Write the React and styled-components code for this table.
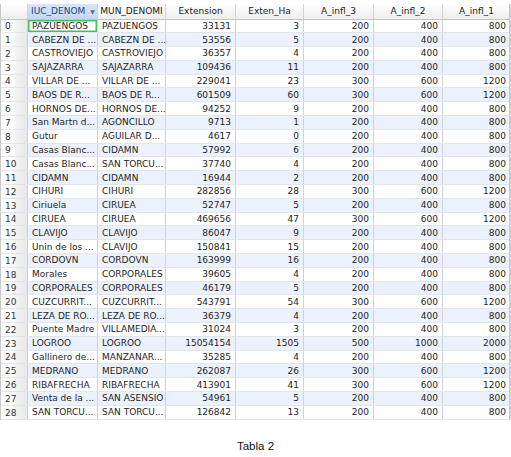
import styled, { createGlobalStyle } from "styled-components";

const GlobalStyle = createGlobalStyle`
  html, body {
    margin: 0;
    padding: 0;
    background: #ffffff;
  }
`;

const COLUMNS = [
  { key: "idx", label: "", width: 27 },
  { key: "iuc", label: "IUC_DENOM", width: 70, text: true, sorted: true },
  { key: "mun", label: "MUN_DENOMI", width: 68, text: true },
  { key: "ext", label: "Extension", width: 70 },
  { key: "ha", label: "Exten_Ha", width: 68 },
  { key: "a3", label: "A_infl_3", width: 70 },
  { key: "a2", label: "A_infl_2", width: 69 },
  { key: "a1", label: "A_infl_1", width: 68 },
];

const ROWS = [
  ["PAZUENGOS", "PAZUENGOS", 33131, 3, 200, 400, 800],
  ["CABEZN DE ...", "CABEZN DE ...", 53556, 5, 200, 400, 800],
  ["CASTROVIEJO", "CASTROVIEJO", 36357, 4, 200, 400, 800],
  ["SAJAZARRA", "SAJAZARRA", 109436, 11, 200, 400, 800],
  ["VILLAR DE ...", "VILLAR DE ...", 229041, 23, 300, 600, 1200],
  ["BAOS DE R...", "BAOS DE R...", 601509, 60, 300, 600, 1200],
  ["HORNOS DE...", "HORNOS DE...", 94252, 9, 200, 400, 800],
  ["San Martn d...", "AGONCILLO", 9713, 1, 200, 400, 800],
  ["Gutur", "AGUILAR D...", 4617, 0, 200, 400, 800],
  ["Casas Blanc...", "CIDAMN", 57992, 6, 200, 400, 800],
  ["Casas Blanc...", "SAN TORCU...", 37740, 4, 200, 400, 800],
  ["CIDAMN", "CIDAMN", 16944, 2, 200, 400, 800],
  ["CIHURI", "CIHURI", 282856, 28, 300, 600, 1200],
  ["Ciriuela", "CIRUEA", 52747, 5, 200, 400, 800],
  ["CIRUEA", "CIRUEA", 469656, 47, 300, 600, 1200],
  ["CLAVIJO", "CLAVIJO", 86047, 9, 200, 400, 800],
  ["Unin de los ...", "CLAVIJO", 150841, 15, 200, 400, 800],
  ["CORDOVN", "CORDOVN", 163999, 16, 200, 400, 800],
  ["Morales", "CORPORALES", 39605, 4, 200, 400, 800],
  ["CORPORALES", "CORPORALES", 46179, 5, 200, 400, 800],
  ["CUZCURRIT...", "CUZCURRIT...", 543791, 54, 300, 600, 1200],
  ["LEZA DE RO...", "LEZA DE RO...", 36379, 4, 200, 400, 800],
  ["Puente Madre", "VILLAMEDIA...", 31024, 3, 200, 400, 800],
  ["LOGROO", "LOGROO", 15054154, 1505, 500, 1000, 2000],
  ["Gallinero de...", "MANZANAR...", 35285, 4, 200, 400, 800],
  ["MEDRANO", "MEDRANO", 262087, 26, 300, 600, 1200],
  ["RIBAFRECHA", "RIBAFRECHA", 413901, 41, 300, 600, 1200],
  ["Venta de la ...", "SAN ASENSIO", 54961, 5, 200, 400, 800],
  ["SAN TORCU...", "SAN TORCU...", 126842, 13, 200, 400, 800],
];

const template = COLUMNS.map((c) => `${c.width}px`).join(" ");

const Page = styled.div`
  /* Display & Box Model */
  width: 511px;
  height: 457px;
  padding-top: 4px;
  box-sizing: border-box;
  display: flex;
  flex-direction: column;
  font-family: "DejaVu Sans", "Liberation Sans", sans-serif;
`;

const Table = styled.div`
  width: 510px;
  border-left: 1px solid #c9c9c9;
  border-right: 1px solid #c9c9c9;
  box-sizing: border-box;
`;

const HeaderRow = styled.div`
  display: grid;
  grid-template-columns: ${template};
  height: 15.5px;
  background: linear-gradient(#ffffff, #eeeeee);
  border-bottom: 1px solid #c4c4c4;
  box-sizing: border-box;
`;

const HeaderCell = styled.div`
  display: flex;
  align-items: center;
  justify-content: ${(p) => (p.$sorted ? "flex-start" : "center")};
  padding-left: ${(p) => (p.$sorted ? "3px" : "0")};
  font-size: 9px;
  color: ${(p) => (p.$sorted ? "#24457e" : "#222222")};
  background: ${(p) => (p.$sorted ? "linear-gradient(#d9e6f7, #c4d7f0)" : "transparent")};
  border-right: 1px solid #d2d2d2;
  overflow: hidden;
  white-space: nowrap;
  gap: 5px;
`;

const SortArrow = styled.span`
  font-size: 6px;
  color: #5a6f92;
`;

const Row = styled.div`
  display: grid;
  grid-template-columns: ${template};
  height: 13.8px;
  background: ${(p) => (p.$odd ? "#ecf2fd" : "#ffffff")};
  border-bottom: 1px solid #e2e5ea;
  box-sizing: border-box;
`;

const IndexCell = styled.div`
  display: flex;
  align-items: flex-end;
  padding-left: 4px;
  padding-bottom: 1px;
  font-size: 9px;
  color: #333333;
  background: linear-gradient(90deg, #ffffff 45%, #f1f1f1 60%, #e9e9e9);
  border-right: 1px solid #cfcfcf;
  box-sizing: border-box;
`;

const Cell = styled.div`
  display: flex;
  align-items: center;
  justify-content: ${(p) => (p.$text ? "flex-start" : "flex-end")};
  padding: 0 4px;
  font-size: 9px;
  color: #1e1e1e;
  border-right: 1px solid #cfd2d8;
  white-space: nowrap;
  overflow: hidden;
  box-sizing: border-box;
  box-shadow: ${(p) => (p.$selected ? "inset 0 0 0 1.5px #3fc35c" : "none")};
  background: ${(p) => (p.$selected ? "#ffffff" : "transparent")};
`;

const Caption = styled.div`
  margin-top: 20px;
  text-align: center;
  font-family: "Liberation Sans", Arial, sans-serif;
  font-size: 11.5px;
  color: #111111;
`;

export default function App() {
  return (
    <>
      <GlobalStyle />
      <Page>
        <Table>
          <HeaderRow>
            {COLUMNS.map((c) => (
              <HeaderCell key={c.key} $sorted={c.sorted}>
                {c.label}
                {c.sorted && <SortArrow>▼</SortArrow>}
              </HeaderCell>
            ))}
          </HeaderRow>
          {ROWS.map((r, i) => (
            <Row key={i} $odd={i % 2 === 1}>
              <IndexCell>{i}</IndexCell>
              {r.map((v, j) => (
                <Cell key={j} $text={j < 2} $selected={i === 0 && j === 0}>
                  {v}
                </Cell>
              ))}
            </Row>
          ))}
        </Table>
        <Caption>Tabla 2</Caption>
      </Page>
    </>
  );
}
